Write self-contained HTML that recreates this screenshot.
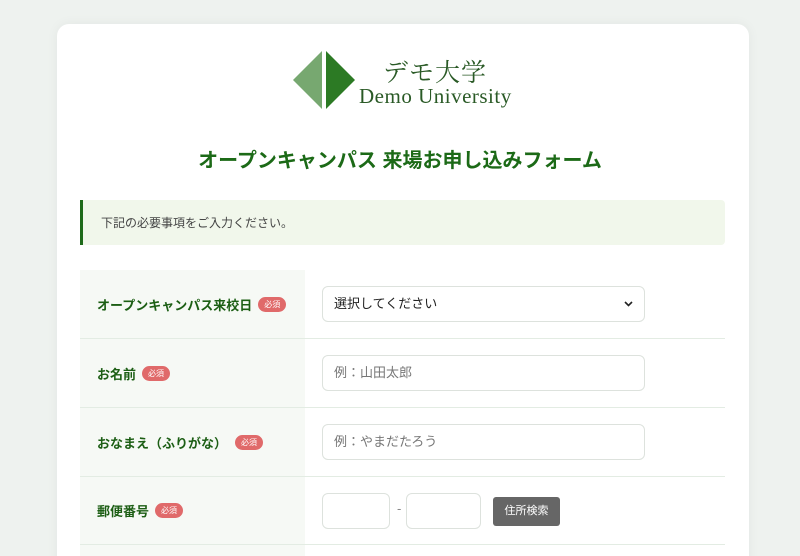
<!DOCTYPE html>
<html><head><meta charset="utf-8"><style>
*{box-sizing:border-box;margin:0;padding:0}
html,body{width:800px;height:556px;overflow:hidden}
body{background:#eef2ef;font-family:"Liberation Sans","Noto Sans CJK JP",sans-serif;position:relative}
.card{position:absolute;left:57px;top:24px;width:692px;height:560px;background:#fff;border-radius:12px;box-shadow:0 0 12px rgba(0,0,0,0.05)}
.abs{position:absolute}
.title{position:absolute;left:0;width:800px;top:144px;text-align:center;font-size:20px;font-weight:bold;color:#1c6a17}
.note{position:absolute;left:80px;top:200px;width:645px;height:45px;background:#f1f7eb;border-left:3px solid #1e6a1a;border-radius:0 4px 4px 0;font-size:12px;color:#444;padding:14px 0 0 18px}
.row{position:absolute;left:80px;width:645px;border-bottom:1px solid #e3ece3}
.lab{position:absolute;left:0;top:0;bottom:0;width:225px;background:#f6f9f5;font-size:13px;font-weight:bold;color:#1c5e14;padding-left:17px;display:flex;align-items:center}
.req{display:inline-block;background:#e06a6a;color:#fff;font-size:8px;border-radius:8px;padding:2px 6px;margin-left:6px;font-weight:normal}
.inp{position:absolute;left:242px;width:323px;height:36px;border:1px solid #dde2dd;border-radius:6px;font-size:13px;color:#777;padding:0 11px;line-height:34px}
</style></head><body>
<div class="card"></div>
<svg class="abs" style="left:292px;top:50px" width="64" height="60"><polygon points="30,1 30,59 1,30" fill="#77a870"/><polygon points="34,1 34,59 63,30" fill="#2c7a24"/></svg>
<div class="abs" style="left:383px;top:53px;font-family:'Noto Serif CJK SC',serif;font-size:25px;color:#2a5a26;letter-spacing:1px">デモ大学</div>
<div class="abs" style="left:359px;top:84px;font-family:'Liberation Serif',serif;font-size:21px;letter-spacing:0.5px;color:#2a5a26">Demo University</div>
<div class="title">オープンキャンパス 来場お申し込みフォーム</div>
<div class="note">下記の必要事項をご入力ください。</div>
<div class="row" style="top:270px;height:69px"><div class="lab">オープンキャンパス来校日<span class="req">必須</span></div>
<div class="inp" style="top:16px;color:#222;display:flex;justify-content:space-between;align-items:center">選択してください<svg width="9" height="6"><path d="M1 1L4.5 4.5L8 1" stroke="#222" stroke-width="1.6" fill="none"/></svg></div></div>
<div class="row" style="top:339px;height:69px"><div class="lab">お名前<span class="req">必須</span></div><div class="inp" style="top:16px">例：山田太郎</div></div>
<div class="row" style="top:408px;height:69px"><div class="lab">おなまえ（ふりがな）<span class="req" style="margin-left:8px">必須</span></div><div class="inp" style="top:16px">例：やまだたろう</div></div>
<div class="row" style="top:477px;height:68px"><div class="lab">郵便番号<span class="req">必須</span></div>
<div class="inp" style="top:16px;width:68px"></div>
<div class="abs" style="left:317px;top:24px;font-size:13px;color:#888">-</div>
<div class="inp" style="top:16px;left:326px;width:75px"></div>
<div class="abs" style="left:413px;top:20px;width:67px;height:29px;background:#666;border-radius:3px;color:#fff;font-size:11px;text-align:center;line-height:29px">住所検索</div></div>
<div class="row" style="top:545px;height:40px;border:none"><div class="lab"></div></div>
</body></html>
